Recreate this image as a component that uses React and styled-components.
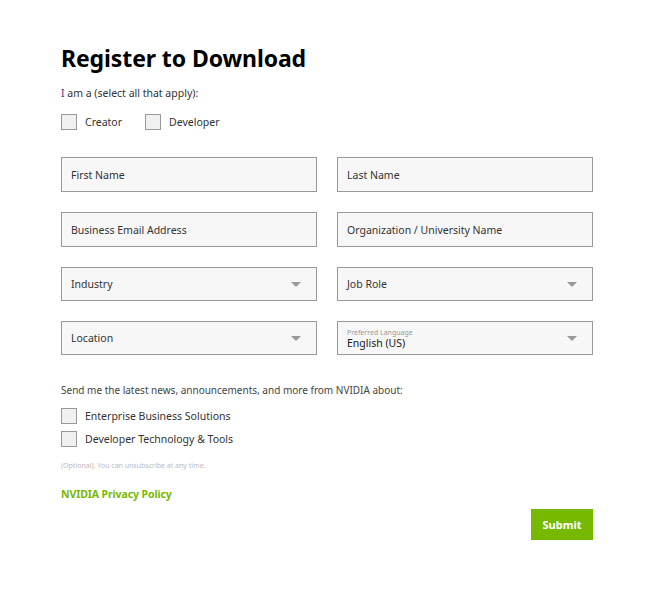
import React from 'react'
import styled, { createGlobalStyle } from 'styled-components'

const GlobalStyle = createGlobalStyle`
  body {
    margin: 0;
    background: #fff;
    font-family: "Noto Sans", "Liberation Sans", sans-serif;
    color: #1a1a1a;
  }
`

const Page = styled.div`
  width: 532px;
  padding: 42px 0 60px 61px;
`

const Title = styled.h1`
  margin: 0;
  font-size: 23px;
  font-weight: 700;
  line-height: 32px;
  color: #000;
  letter-spacing: -0.1px;
`

const Prompt = styled.p`
  margin: 12px 0 0;
  font-size: 10.5px;
  line-height: 14px;
  color: #333;
`

const Caret = styled.span`
  color: #6a1b8a;
`

const CheckRow = styled.div`
  display: flex;
  gap: ${p => p.$gap || 0}px;
  margin-top: ${p => p.$top || 0}px;
`

const CheckLabel = styled.label`
  display: flex;
  align-items: center;
  gap: 8px;
  font-size: 10.5px;
  color: #333;
  line-height: 16px;
`

const Box = styled.span`
  width: 14px;
  height: 14px;
  border: 1px solid #999;
  background: #f0f0f0;
`

const Grid = styled.div`
  display: grid;
  grid-template-columns: 256px 256px;
  column-gap: 20px;
  row-gap: 20px;
  margin-top: 27px;
`

const Field = styled.div`
  position: relative;
  height: ${p => p.$h || 35}px;
  box-sizing: border-box;
  border: 1px solid #999;
  background: #f7f7f7;
  display: flex;
  flex-direction: column;
  justify-content: center;
  padding: 0 9px;
  font-size: 10.5px;
  color: #333;
`

const FloatLabel = styled.span`
  font-size: 7px;
  line-height: 8px;
  color: #999;
  margin-top: 2px;
`

const Value = styled.span`
  font-size: 10.5px;
  line-height: 13px;
  color: #1a1a1a;
`

const Arrow = styled.span`
  position: absolute;
  right: 15px;
  top: 50%;
  margin-top: -2px;
  width: 0;
  height: 0;
  border-left: 5px solid transparent;
  border-right: 5px solid transparent;
  border-top: 5px solid #999;
`

const News = styled.p`
  margin: 28px 0 0;
  font-size: 10px;
  line-height: 14px;
  color: #444;
`

const Stack = styled.div`
  display: flex;
  flex-direction: column;
  gap: 7px;
  margin-top: 11px;
`

const Fine = styled.p`
  margin: 14px 0 0;
  font-size: 7px;
  line-height: 10px;
  color: #bbb;
`

const PolicyLink = styled.a`
  display: block;
  margin-top: 16px;
  font-size: 10.5px;
  font-weight: 700;
  color: #76b900;
  text-decoration: none;
  line-height: 14px;
  letter-spacing: -0.1px;
`

const Actions = styled.div`
  display: flex;
  justify-content: flex-end;
  margin-top: 8px;
`

const Submit = styled.button`
  width: 62px;
  height: 31px;
  border: none;
  background: #76b900;
  color: #fff;
  font-family: inherit;
  font-size: 11px;
  font-weight: 700;
  padding: 0;
`

const Select = ({ label, value }) => (
  <Field $h={34}>
    {value ? (
      <>
        <FloatLabel>{label}</FloatLabel>
        <Value>{value}</Value>
      </>
    ) : (
      label
    )}
    <Arrow />
  </Field>
)

const Check = ({ children }) => (
  <CheckLabel>
    <Box />
    {children}
  </CheckLabel>
)

export default function App() {
  return (
    <>
      <GlobalStyle />
      <Page>
        <Title>Register to Download</Title>
        <Prompt>
          <Caret>I</Caret> am a (select all that apply):
        </Prompt>
        <CheckRow $gap={23} $top={14}>
          <Check>Creator</Check>
          <Check>Developer</Check>
        </CheckRow>
        <Grid>
          <Field>First Name</Field>
          <Field>Last Name</Field>
          <Field>Business Email Address</Field>
          <Field>Organization / University Name</Field>
          <Select label="Industry" />
          <Select label="Job Role" />
          <Select label="Location" />
          <Select label="Preferred Language" value="English (US)" />
        </Grid>
        <News>Send me the latest news, announcements, and more from NVIDIA about:</News>
        <Stack>
          <Check>Enterprise Business Solutions</Check>
          <Check>Developer Technology &amp; Tools</Check>
        </Stack>
        <Fine>(Optional). You can unsubscribe at any time.</Fine>
        <PolicyLink href="#">NVIDIA Privacy Policy</PolicyLink>
        <Actions>
          <Submit>Submit</Submit>
        </Actions>
      </Page>
    </>
  )
}
